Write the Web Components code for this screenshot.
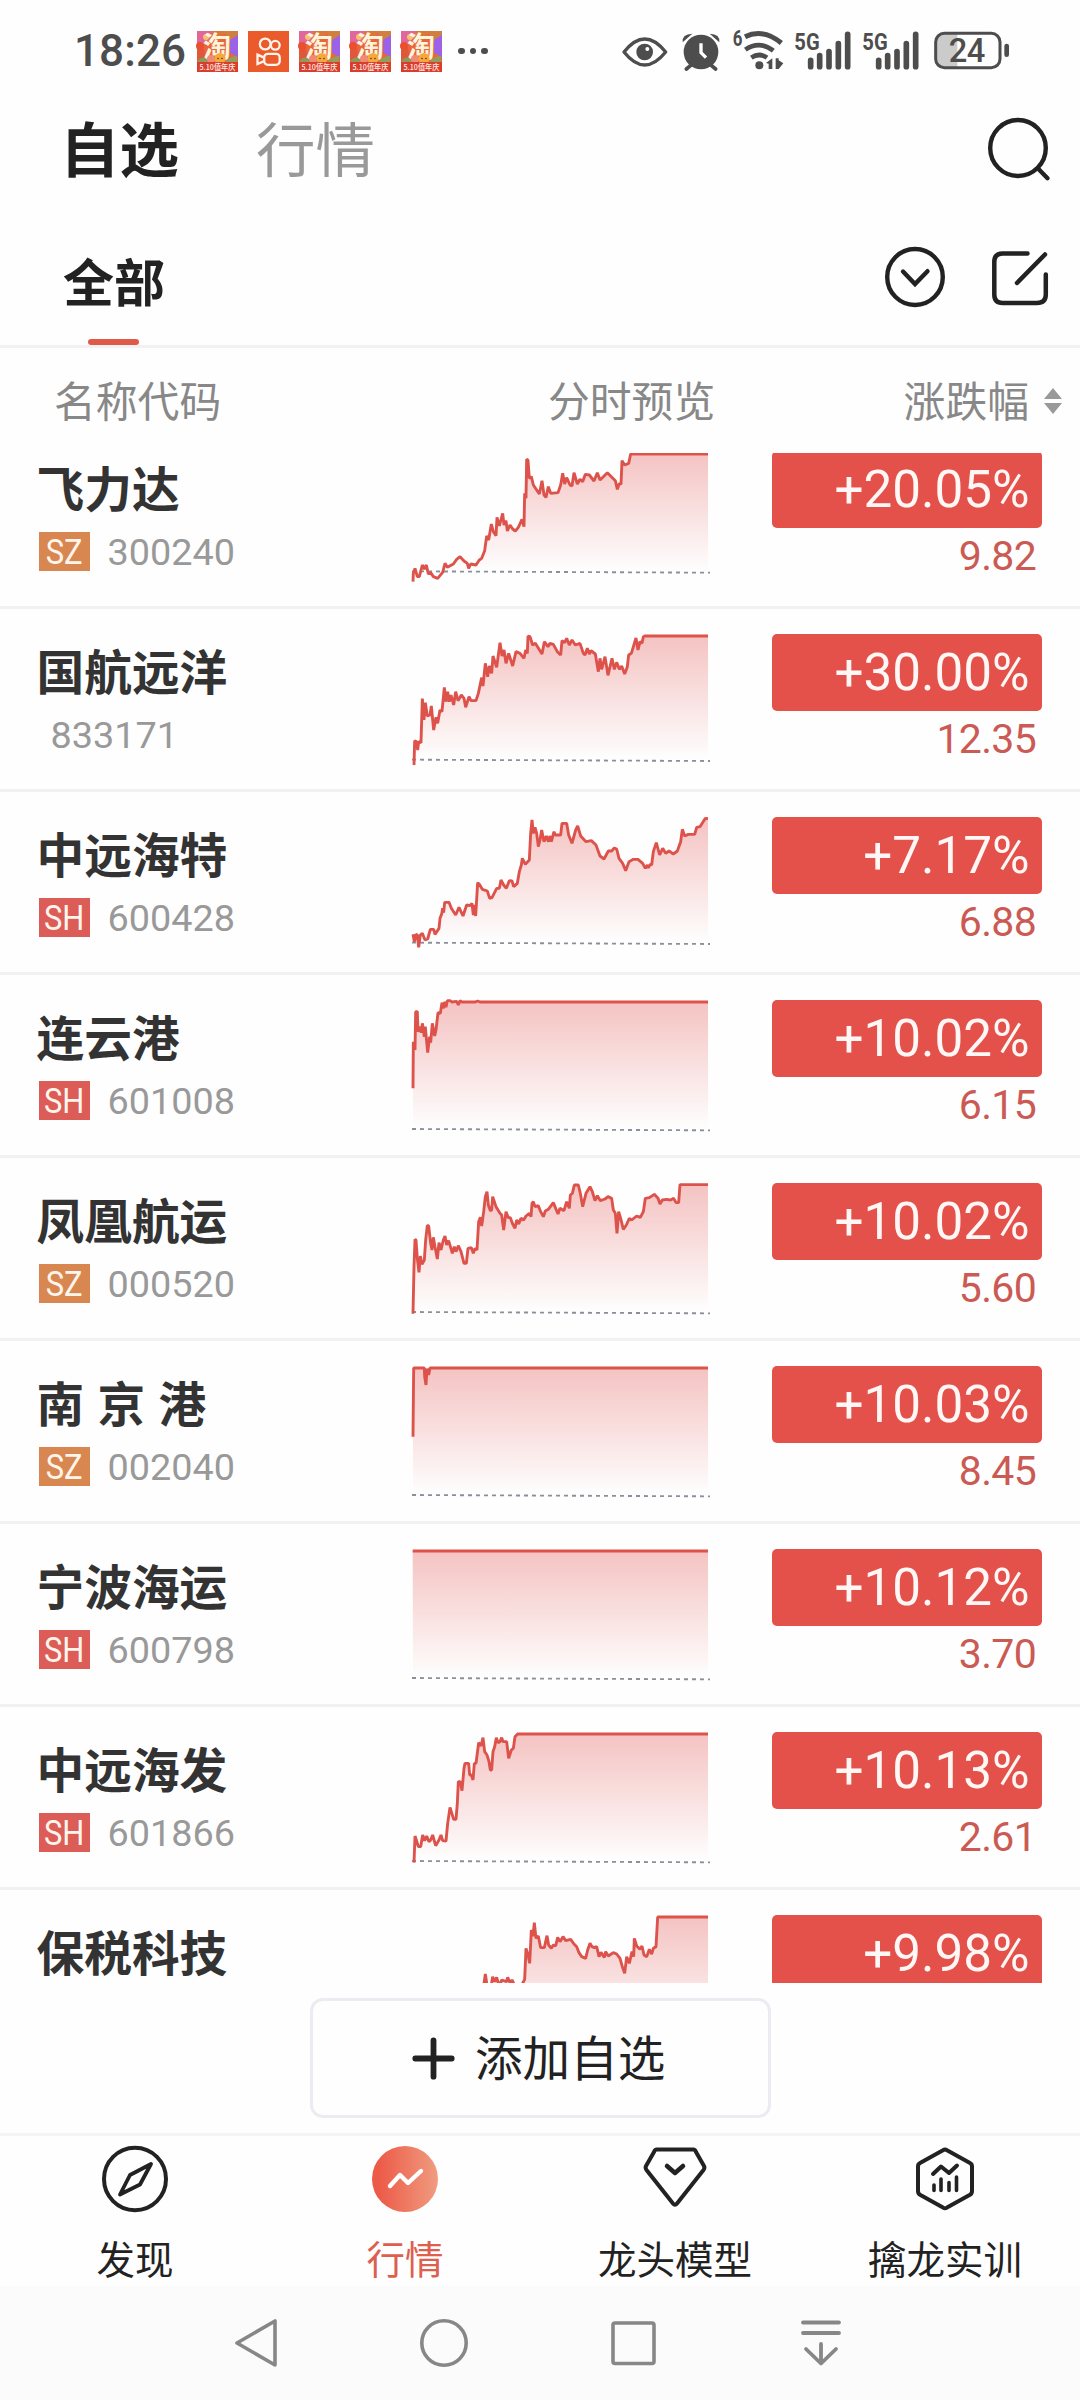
<!DOCTYPE html>
<html lang="zh-CN">
<head>
<meta charset="utf-8">
<title>自选</title>
<style>
html,body{margin:0;padding:0;background:#fefefe}
body{width:1080px;height:2400px;overflow:hidden;font-family:"Noto Sans CJK SC",sans-serif;color:#222}
</style>
</head>
<body>
<watch-app></watch-app>
<script>
const define = (name, html, after) => customElements.define(name, class extends HTMLElement {
  connectedCallback() {
    if (this.shadowRoot) return;
    const root = this.attachShadow({ mode: 'open' });
    root.innerHTML = typeof html === 'function' ? html(this) : html;
    if (after) after(this, root);
  }
});

/* ---------- status bar ---------- */
define('shop-icon', `<style>:host{display:block;width:41px;height:41px}svg{display:block;overflow:visible}</style>
<svg width="41" height="41" viewBox="0 0 41 41">
<rect width="41" height="41" fill="#e8663a"/>
<path d="M0 0H17L10 12 0 17Z" fill="#e0669c"/><path d="M15 0H30L22 9 12 8Z" fill="#d9773d"/><path d="M28 0H41V8L30 12Z" fill="#cf8040"/>
<path d="M33 9 41 4V26L33 22Z" fill="#9b62e8"/><path d="M0 19 6 14 9 28 0 30Z" fill="#e0583a"/><circle cx="3" cy="15" r="4" fill="#ea5030"/>
<circle cx="9" cy="6" r="3" fill="#f6c36a"/><path d="M1 29q5-5 11 0l2 3H1Z" fill="#8c9a5a"/><path d="M30 29q5-4 10-4v6H28Z" fill="#8fa05e"/>
<text x="6" y="26" font-family="Noto Sans CJK SC" font-weight="700" font-size="28" fill="#fff3dc">淘</text>
<circle cx="14" cy="28" r="4" fill="#ee8a76"/><circle cx="23" cy="27.5" r="5.5" fill="#f5a93c"/><circle cx="21" cy="27.5" r=".8" fill="#6b2a10"/><circle cx="25" cy="27.5" r=".8" fill="#6b2a10"/>
<rect y="31" width="41" height="10" fill="#d93d2c"/>
<text x="2.5" y="39.3" textLength="36" lengthAdjust="spacingAndGlyphs" font-family="Noto Sans CJK SC" font-weight="500" font-size="8" fill="#ffe9e0">5.10值年庆</text>
</svg>`);
define('video-icon', `<style>:host{display:block;width:41px;height:41px}svg{display:block}</style>
<svg width="41" height="41" viewBox="0 0 41 41" fill="none" stroke="#fff4ea" stroke-width="2.3"><rect width="41" height="41" fill="#ea5a2b" stroke="none"/>
<circle cx="17.2" cy="13" r="5.4"/><circle cx="27.3" cy="14.3" r="4.4"/><rect x="16.2" y="22.8" width="15.5" height="11" rx="3.5"/><path d="M15.5 26.4 9.5 23.6V33L15.5 30.4"/></svg>`);
define('status-bar', `<style>
:host{display:flex;box-sizing:border-box;height:100px;padding:2px 0 0 74px;align-items:center;color:#4d4d4d}
time{font:500 44px/60px Roboto,sans-serif;width:123px;letter-spacing:.1px}
.apps{display:flex;gap:10px;flex:1}.sys{display:block;width:460px;height:80px;margin:-2px 13.3px 0 0}
.dots{padding-left:6px;display:flex;gap:5px;align-items:center}.dots i{width:6.5px;height:6.5px;border-radius:50%;background:#4d4d4d}
</style>
<time>18:26</time>
<div class="apps"><shop-icon></shop-icon><video-icon></video-icon><shop-icon></shop-icon><shop-icon></shop-icon><shop-icon></shop-icon><div class="dots"><i></i><i></i><i></i></div></div>
<svg class="sys" viewBox="20 0 1380 240" fill="none" stroke="#4d4d4d" stroke-width="10">
<path d="M71 126Q133 48 196 126Q133 204 71 126Z" stroke-linejoin="round"/><circle cx="133" cy="126" r="25" fill="#4d4d4d" stroke="none"/><circle cx="141" cy="117" r="6" fill="#fff" stroke="none"/>
<circle cx="302" cy="126" r="52" fill="#4d4d4d" stroke="none"/><path d="M275 163 258 177M329 163 346 177" stroke-width="11" stroke-linecap="round"/><path d="M247 97Q244 72 276 71Z M357 97Q360 72 328 71Z" fill="#4d4d4d" stroke="none"/><path d="M302 100V128L317 143" stroke="#fff" stroke-width="10"/>
<text x="397" y="109" font-family="Roboto" font-weight="700" font-size="66" textLength="29" lengthAdjust="spacingAndGlyphs" fill="#4d4d4d" stroke="none">6</text>
<path d="M434 80Q488 54 543 99" stroke-width="15"/><path d="M435 119Q477 90 519 122" stroke-width="14"/><path d="M453 143Q477 127 500 143" stroke-width="14"/><circle cx="477" cy="166" r="12" fill="#4d4d4d" stroke="none"/>
<path d="M497 159 516 145V177H505V161ZM526 145H535V151L549 160 535 177H526Z" fill="#4d4d4d" stroke="none"/>
<g><text x="582" y="119" font-family="Roboto" font-weight="700" font-size="72" textLength="76" lengthAdjust="spacingAndGlyphs" fill="#4d4d4d" stroke="none">5G</text>
<path d="M631 151V170M658 137V170M686 125V170M714 101V170M742 73V170" stroke-width="17" stroke-linecap="round"/></g>
<g transform="translate(204 0)"><text x="582" y="119" font-family="Roboto" font-weight="700" font-size="72" textLength="76" lengthAdjust="spacingAndGlyphs" fill="#4d4d4d" stroke="none">5G</text>
<path d="M631 151V170M658 137V170M686 125V170M714 101V170M742 73V170" stroke-width="17" stroke-linecap="round"/></g>
<path d="M1030 70H1071V172H1030Q1006 172 1006 146V96Q1006 70 1030 70Z" fill="#cbcbcb" stroke="none"/>
<rect x="1006" y="70" width="193" height="103" rx="26" stroke-width="9"/><path d="M1219 108V134" stroke-width="14" stroke-linecap="round"/>
<text x="1045" y="156" font-family="Roboto" font-weight="500" font-size="98" textLength="110" fill="#4d4d4d" stroke="none">24</text>
</svg>`);

/* ---------- headers ---------- */
define('page-tabs', `<style>
:host{display:flex;box-sizing:border-box;height:119px;padding:0 28px 21px 60px;align-items:center;justify-content:space-between}
nav{display:flex;gap:77px;font-size:59.5px;line-height:90px;margin-top:-6px}b{font-weight:700}span{color:#999}svg{display:block;margin-top:-2px}
</style><nav><b>自选</b><span>行情</span></nav>
<svg width="68" height="68" viewBox="984 114 68 68" fill="none" stroke="#222" stroke-width="4.4" stroke-linecap="round"><ellipse cx="1018" cy="148" rx="27.8" ry="28"/><path d="M1038 168.5 1047.5 178.2"/></svg>`);
define('group-tabs', `<style>
:host{display:flex;box-sizing:border-box;height:129px;border-bottom:3px solid #f2f2f2;padding:0 28px 0 63px;justify-content:space-between}
.g{display:flex;flex-direction:column;font-weight:700;font-size:51px;line-height:70px;padding-top:26px;width:102px;box-sizing:border-box}
i{width:51px;height:6px;border-radius:3px;background:#e05a4a;margin:24px 0 0 25px}
.a{display:flex;gap:35px;padding-top:24px}svg{display:block}
</style><div class="g">全部<i></i></div>
<div class="a"><svg width="68" height="68" viewBox="881 243 68 68" fill="none" stroke="#222" stroke-width="4.4" stroke-linecap="round"><ellipse cx="915" cy="277" rx="27.8" ry="28"/><path d="M903 271.5 915 284 927.5 271.2"/></svg>
<svg width="68" height="68" viewBox="984 243 68 68" fill="none" stroke="#222" stroke-width="4.5" stroke-linecap="round"><path d="M1027.5 253.5H1002.5Q994.3 253.5 994.3 262V294.5Q994.3 303 1002.5 303H1037Q1045.8 303 1045.8 294.5V274.5M1045 254.5 1017 283"/></svg></div>`);
define('list-head', `<style>
:host{display:flex;box-sizing:border-box;height:105px;padding:19px 17px 0 54px;font-size:41.8px;line-height:64px;color:#888}
.n{width:494px}.p{flex:1}svg{display:block;margin:20px 0 0 14px}
</style><span class="n">名称代码</span><span class="p">分时预览</span><span>涨跌幅</span>
<svg width="20" height="28" viewBox="0 0 20 28" fill="#999"><path d="M10 1 19 12H1ZM1 16H19L10 27Z"/></svg>`);

/* ---------- intraday preview; one unit is a third of a pixel ---------- */
let chartId = 0;
define('trend-chart', el => {
  const id = 'g' + chartId++, top = +el.getAttribute('top'), pts = el.getAttribute('points'), base = +el.getAttribute('base');
  return `<style>:host{display:block;width:340px;height:183px}svg{display:block}</style>
<svg width="340" height="183" viewBox="0 ${top} 1020 549" fill="none">
<defs><linearGradient id="${id}" gradientUnits="userSpaceOnUse" x1="0" x2="0" y1="${top + 81}" y2="${base}"><stop stop-color="#f4c3c2"/><stop offset="1" stop-color="#fefefe"/></linearGradient></defs>
<polygon points="69,${base} ${pts} 954,${base}" fill="url(#${id})"/>
<path d="M66 ${base}L960 ${base + 4}" stroke="#8b8f99" stroke-width="5.5" stroke-dasharray="12 12"/>
<polyline points="${pts}" stroke="#dd524b" stroke-width="8.6" stroke-linejoin="bevel"/>
</svg>`;
});

define('stock-row', el => {
  const a = n => el.getAttribute(n), m = a('market');
  return `<style>
:host{display:grid;grid-template-columns:390px 340px 1fr;height:180px;border-bottom:3px solid #f1f1f2}
.id{padding:37px 0 0 36.5px}
.name{font-weight:700;font-size:47.7px;line-height:48px;height:48px;color:#333;white-space:pre;word-spacing:2.5px}
.meta{display:flex;align-items:center;height:39px;margin:21px 0 0 2px;font:37.8px/39px Roboto,sans-serif;color:#999}
.tag{width:51px;height:39px;color:#fff5ec;font-size:35.5px;line-height:40px;margin-right:18px;display:flex;justify-content:center}
.tag span{transform:scaleX(.87)}
.SZ{background:#d98750}.SH{background:#dc5d57}.code{padding:2px 0 0 ${m ? 0 : 12}px}
.q{padding:25px 0 0 42px}
.pct{width:270px;height:77px;box-sizing:border-box;padding-right:12.5px;border-radius:5px;background:#e3514a;color:#fff7f5;font:51.2px/78px Roboto,sans-serif;text-align:right}
.price{width:264px;margin-top:3px;font:41px/50px Roboto,sans-serif;letter-spacing:-.7px;text-align:right;color:#cb5a54}
</style>
<div class="id"><div class="name">${a('name')}</div>${a('code') ? `<div class="meta">${m ? `<span class="tag ${m}"><span>${m}</span></span>` : ''}<span class="code">${a('code')}</span></div>` : ''}</div>
<trend-chart top="${a('top')}" base="${a('base')}" points="${a('points')}"></trend-chart>
<div class="q"><div class="pct">${a('pct')}</div><div class="price">${a('price')}</div></div>`;
});

const STOCKS = [
 ['飞力达','SZ','300240','+20.05%','9.82',-12,424,'69,455 70,430 75,415 82,440 88,440 97,405 103,417 109,405 115,432 122,428 130,440 143,445 158,427 165,400 172,412 190,402 200,388 210,380 222,393 232,400 236,415 242,402 258,405 268,390 275,385 284,362 290,318 296,330 304,282 310,305 318,317 321,262 328,288 338,250 342,285 348,272 352,303 360,285 368,297 376,303 385,292 396,268 402,290 404,190 408,205 410,88 414,90 418,145 424,140 430,165 448,192 456,152 462,195 468,202 475,170 482,190 504,188 512,165 518,130 524,162 530,143 540,165 546,168 552,128 562,162 570,148 578,155 586,133 598,135 612,153 622,128 630,150 640,140 652,128 664,140 676,152 682,178 688,160 693,163 696,92 704,105 716,100 722,72 954,72'],
 ['国航远洋','','833171','+30.00%','12.35',537,989,'72,1005 74,932 80,935 83,960 86,935 93,938 97,806 102,870 106,818 112,858 120,855 124,828 131,900 138,862 143,880 150,840 156,845 163,772 168,815 173,785 178,815 183,795 191,825 197,785 204,812 214,795 222,805 227,832 237,800 243,812 258,812 265,790 275,743 279,768 286,700 293,740 298,708 305,730 309,678 320,712 330,638 336,678 342,660 348,700 356,670 368,708 378,665 390,670 402,685 407,660 412,670 414,618 420,620 428,645 436,640 456,672 463,635 474,650 480,640 490,643 502,665 512,675 516,632 524,638 530,625 538,645 546,630 556,645 570,640 580,670 585,675 592,655 598,672 603,662 616,672 625,725 630,685 635,718 645,680 654,736 666,685 673,718 680,697 688,718 695,708 704,732 712,710 716,675 724,670 738,624 744,660 750,635 756,640 760,620 764,618 954,618'],
 ['中远海特','SH','600428','+7.17%','6.88',6,458,'69,433 73,455 78,433 82,435 86,472 91,435 97,430 105,450 113,447 121,418 131,418 135,433 147,415 150,385 155,372 158,355 161,368 164,337 177,337 184,355 197,375 207,352 219,378 230,345 240,347 246,340 250,375 253,345 257,378 263,278 268,283 277,298 292,303 299,325 306,323 320,295 328,295 333,270 341,285 349,295 358,272 366,273 371,290 382,280 388,245 394,225 397,205 406,223 418,210 422,130 426,90 430,130 435,112 440,130 445,170 450,150 455,120 462,155 469,138 475,155 480,138 484,155 492,125 496,135 512,135 516,100 530,100 536,135 546,160 557,120 563,108 572,138 588,155 604,152 618,165 630,198 642,207 655,183 665,183 673,174 680,177 687,205 698,220 707,242 717,215 730,208 744,208 758,220 766,235 772,225 775,233 781,223 785,225 790,185 799,158 809,195 818,175 827,190 837,183 850,192 862,183 872,155 877,118 884,138 895,133 914,133 920,112 930,110 946,85 954,86'],
 ['连云港','SH','601008','+10.02%','6.15',555,1017,'69,895 70,755 75,780 77,665 82,665 84,725 90,710 94,728 97,700 103,740 106,710 113,788 119,740 122,758 127,700 134,738 138,720 144,668 151,670 156,638 161,655 165,635 168,652 172,632 180,632 186,636 200,634 205,645 210,632 216,636 256,636 263,633 270,636 954,636'],
 ['凤凰航运','SZ','000520','+10.02%','5.60',24,486,'69,491 72,350 75,268 78,270 82,325 87,367 91,318 96,343 103,330 107,270 112,226 116,228 122,280 126,300 130,262 135,290 142,327 147,278 153,300 160,270 165,258 170,285 176,272 187,310 193,290 198,305 205,287 213,305 222,340 229,340 234,295 244,293 250,310 255,295 261,300 266,215 271,202 275,228 281,185 286,140 291,125 295,165 301,182 305,180 308,140 318,170 330,190 335,195 341,240 348,185 355,203 361,203 368,222 375,235 380,210 386,222 393,205 401,210 408,198 418,190 423,200 426,160 430,155 435,170 445,167 452,185 460,200 466,183 475,178 490,158 497,175 504,192 510,175 522,182 530,155 538,175 541,135 547,130 553,105 565,105 571,130 578,170 588,130 600,110 607,125 615,152 622,137 631,152 645,147 654,140 665,145 670,180 676,190 681,250 686,185 692,205 700,238 709,225 718,205 725,210 740,198 751,202 760,185 766,145 778,143 793,133 804,145 810,162 817,150 830,148 842,150 851,145 858,158 866,158 870,104 954,104'],
 ['南 京 港','SZ','002040','+10.03%','8.45',573,1035,'69,860 71,654 103,654 104,680 108,705 111,656 116,675 120,654 954,654'],
 ['宁波海运','SH','600798','+10.12%','3.70',573,1035,'68,654 954,654'],
 ['中远海发','SH','601866','+10.13%','2.61',51,513,'72,518 75,438 79,450 85,470 92,470 98,435 104,452 110,438 117,455 122,450 128,435 137,467 147,450 153,435 158,452 168,453 173,400 180,352 191,388 198,388 202,340 205,275 211,275 216,302 222,235 225,220 236,220 239,255 244,255 249,270 253,220 258,220 266,158 273,168 279,143 284,185 291,195 297,215 301,240 305,240 309,185 314,170 319,143 324,158 330,155 335,143 339,155 350,155 356,205 364,180 370,175 375,140 383,132 954,132'],
 ['保税科技','','','+9.98%','',51 + 549,1062,'69,1062 110,960 200,920 280,895 286,852 292,892 303,890 308,860 314,875 320,862 328,890 335,870 350,875 353,862 360,878 366,870 376,890 395,885 404,868 408,775 414,795 419,820 424,720 429,738 433,698 438,745 445,738 452,773 463,773 471,737 476,765 484,775 490,765 497,768 503,742 510,755 519,740 527,752 542,748 552,762 560,770 567,788 575,800 587,805 593,780 600,760 606,770 613,773 620,770 627,800 633,787 643,802 647,785 655,798 670,788 680,792 690,805 697,830 704,850 710,800 718,820 726,785 731,800 733,745 740,768 750,778 756,768 762,795 770,800 778,778 785,792 790,775 798,770 803,681 954,681']
];
define('stock-list', `<style>:host{display:block;height:1530px;overflow:hidden}.in{margin-top:-27px}</style><div class="in"></div>`, (el, root) => {
  const keys = ['name','market','code','pct','price','top','base','points'];
  for (const s of STOCKS) {
    const r = document.createElement('stock-row');
    keys.forEach((k, i) => r.setAttribute(k, s[i]));
    root.querySelector('.in').append(r);
  }
});

/* ---------- bottom ---------- */
define('add-button', `<style>
:host{display:flex;justify-content:center;box-sizing:border-box;height:153px;padding-top:15px;border-bottom:3px solid #f4f4f5}
button{all:unset;box-sizing:border-box;width:461px;height:120px;border:3px solid #ebecf2;border-radius:13px;display:flex;align-items:center;padding-left:99px;font-size:47.6px;line-height:70px;color:#222}
svg{display:block;margin-right:20.5px}span{margin-top:-5px}
</style><button><svg width="43" height="43" viewBox="0 0 43 43" stroke="#222" stroke-width="5.8" stroke-linecap="round"><path d="M21.5 3.3V39.7M3.3 21.5H39.7"/></svg><span><slot></slot></span></button>`);
define('tab-item', `<style>
:host{display:flex;flex-direction:column;align-items:center;width:270px;font-size:38.5px;line-height:56px;color:#222;padding-top:8px}
:host([active]){color:#dd604f}
.i{height:70px;margin-bottom:15px}
</style><div class="i"><slot name="icon"></slot></div><slot></slot>`);
define('tab-bar', `<style>:host{display:flex;height:150px}svg{display:block}</style>
<tab-item><svg slot="icon" width="70" height="70" viewBox="-35 -35 70 70" fill="none" stroke="#222" stroke-width="4"><ellipse rx="31" ry="31.2"/><path d="M16-15-5-4-15 15.5 5 5.5Z" stroke-linejoin="round" stroke-width="3.8"/></svg>发现</tab-item>
<tab-item active><svg slot="icon" width="70" height="70" viewBox="-35 -35 70 70" fill="none"><defs><linearGradient id="a"><stop offset=".1" stop-color="#ec5b48"/><stop offset="1" stop-color="#f09c80"/></linearGradient></defs><circle r="33" fill="url(#a)"/><path d="M-15 7-5-4 3 4 16-8" stroke="#fff" stroke-width="4.4" stroke-linecap="round" stroke-linejoin="round"/></svg>行情</tab-item>
<tab-item><svg slot="icon" width="70" height="70" viewBox="-35 -35 70 70" fill="none" stroke="#222" stroke-width="4" stroke-linejoin="round" stroke-linecap="round"><path d="M-18.5-29.5H18.5Q20-29.5 21-27L29-13Q30-11 28.5-9L2 24.5Q0 27-2 24.5L-28.5-9Q-30-11-29-13L-21-27Q-20-29.5-18.5-29.5Z"/><path d="M-8-13 0-6 8-13" stroke-width="4.5"/></svg>龙头模型</tab-item>
<tab-item><svg slot="icon" width="70" height="70" viewBox="-35 -35 70 70" fill="none" stroke="#222" stroke-width="4" stroke-linejoin="round" stroke-linecap="round"><path d="M-2-28.8Q0-30 2-28.8L25-16Q27-15 27-12.5V12Q27 14.5 25 15.8L2 28.6Q0 29.8-2 28.6L-25 15.8Q-27 14.5-27 12V-12.5Q-27-15-25-16Z"/><path d="M-12-5-4-12.5 4-6 12-13.5"/><path d="M-11 6V11.5M-4 0V11.5M4 3.5V11.5M11.5-2V11.5" stroke-width="3.6"/></svg>擒龙实训</tab-item>`);
define('system-nav', `<style>:host{display:flex;box-sizing:border-box;height:114px;background:#fbfbfb;padding:27px 229px 0 226px;justify-content:space-between}svg{display:block}</style>
<svg width="60" height="60" viewBox="226 2313 60 60" fill="none" stroke="#878787" stroke-width="3.6" stroke-linejoin="round"><path d="M275 2321V2365L237 2343Z"/></svg>
<svg width="60" height="60" viewBox="414 2313 60 60" fill="none" stroke="#878787" stroke-width="3.6"><circle cx="444" cy="2343" r="22.2"/></svg>
<svg width="60" height="60" viewBox="602 2313 60 60" fill="none" stroke="#878787" stroke-width="3.6"><rect x="612" y="2323" width="41" height="40.5" rx="2"/></svg>
<svg width="60" height="60" viewBox="791 2313 60 60" fill="none" stroke="#878787" stroke-width="3.8" stroke-linecap="round" stroke-linejoin="round"><path d="M803 2322.5H839M803 2333H839M821 2344V2363M806 2349 821 2363.5 836 2349"/></svg>`);
define('watch-app', `<style>:host{display:flex;flex-direction:column;width:1080px;height:2400px;background:#fefefe}:host>*{flex:none}</style>
<status-bar></status-bar><page-tabs></page-tabs><group-tabs></group-tabs><list-head></list-head><stock-list></stock-list><add-button>添加自选</add-button><tab-bar></tab-bar><system-nav></system-nav>`);
</script>
</body>
</html>
